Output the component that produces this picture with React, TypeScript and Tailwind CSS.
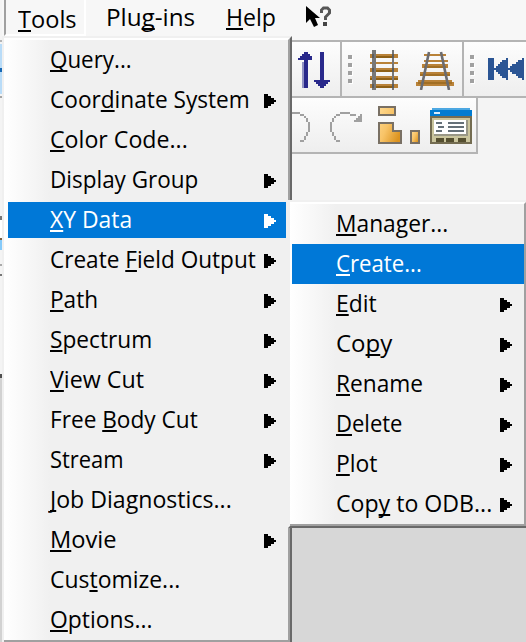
import { useLayoutEffect, useRef, useState } from "react";

type Item = { text: string; key: number; width: number; sub?: boolean; active?: boolean };

const toolsMenu: Item[] = [
  { text: "Query...", key: 0, width: 82 },
  { text: "Coordinate System", key: 4, width: 200, sub: true },
  { text: "Color Code...", key: 0, width: 138 },
  { text: "Display Group", key: -1, width: 148, sub: true },
  { text: "XY Data", key: 0, width: 82, sub: true, active: true },
  { text: "Create Field Output", key: 7, width: 206, sub: true },
  { text: "Path", key: 0, width: 48, sub: true },
  { text: "Spectrum", key: 0, width: 102, sub: true },
  { text: "View Cut", key: 0, width: 94, sub: true },
  { text: "Free Body Cut", key: 5, width: 148, sub: true },
  { text: "Stream", key: -1, width: 74, sub: true },
  { text: "Job Diagnostics...", key: 0, width: 182 },
  { text: "Movie", key: 0, width: 67, sub: true },
  { text: "Customize...", key: 3, width: 130 },
  { text: "Options...", key: 0, width: 102 },
];

const xyMenu: Item[] = [
  { text: "Manager...", key: 0, width: 112 },
  { text: "Create...", key: 0, width: 86, active: true },
  { text: "Edit", key: 0, width: 41, sub: true },
  { text: "Copy", key: 2, width: 56, sub: true },
  { text: "Rename", key: 0, width: 87, sub: true },
  { text: "Delete", key: 0, width: 66, sub: true },
  { text: "Plot", key: 0, width: 42, sub: true },
  { text: "Copy to ODB...", key: 3, width: 156, sub: true },
];

/* Menu caption condensed to its column width, with the mnemonic underlined. */
function Label({ text, mnemonic, width }: { text: string; mnemonic: number; width: number }) {
  const ref = useRef<HTMLSpanElement>(null);
  const [scale, setScale] = useState(1);
  useLayoutEffect(() => {
    if (ref.current) setScale(width / ref.current.offsetWidth);
  }, [width]);
  return (
    <span ref={ref} className="inline-block origin-left whitespace-pre" style={{ transform: `scaleX(${scale})` }}>
      {mnemonic < 0 ? text : (
        <>
          {text.slice(0, mnemonic)}
          <span className="underline decoration-2 underline-offset-2 [text-decoration-skip-ink:none]">{text[mnemonic]}</span>
          {text.slice(mnemonic + 1)}
        </>
      )}
    </span>
  );
}

function Arrow() {
  return (
    <svg width="12" height="14" viewBox="0 0 6 7" fill="currentColor" shapeRendering="crispEdges">
      <path d="M0 0h2v1h1.500v1H5v1h1v1H5v1H3.500v1H2v1H0z" />
    </svg>
  );
}

function MenuRow({ item, nested }: { item: Item; nested?: boolean }) {
  const box = nested ? "ml-0.5 h-10 pl-[44px] pr-3" : "my-0.5 ml-1 mr-0.5 h-9 pl-[42px] pr-2.5";
  const tone = item.active ? "bg-[#0078d7] text-white" : "text-black";
  return (
    <div className={`flex shrink-0 items-center justify-between ${box} ${tone}`}>
      <div className="h-[34px] w-0 leading-8"><Label text={item.text} mnemonic={item.key} width={item.width} /></div>
      {item.sub && <div className="pt-0.5"><Arrow /></div>}
    </div>
  );
}

function Grip() {
  return (
    <div className="flex flex-col gap-1">
      {[0, 1, 2, 3].map((n) => <i key={n} className="size-1 bg-[#a0a0a0] shadow-[1px_1px_white]" />)}
    </div>
  );
}

function SortIcon() {
  return (
    <svg width="32" height="36" viewBox="0 0 16 18" shapeRendering="crispEdges">
      <path fill="#9193c4" d="M2 5h1v13H2z" />
      <path fill="#29298b" d="M3 0h2v1h1v1h1v2H5v14H3V4H0V3h1V2h1V1h1zM11 0h2v14h3v1h-1v1h-1v1h-1v1h-2v-1h-1v-1H9v-1H8v-1h3z" />
    </svg>
  );
}

function Ladder() {
  return (
    <svg width="28" height="40" viewBox="0 0 14 20" shapeRendering="crispEdges">
      <path fill="#b98238" d="M0 2h14v2H0zM0 6h14v1H0zM0 9h14v2H0zM0 13h14v2H0zM0 17h14v2H0z" />
      <path fill="#8e6016" d="M3 3h8v1H3zM3 10h8v1H3zM0 14h14v1H0zM3 18h8v1H3z" />
      <path fill="#787878" d="M1 0h2v20H1zM11 0h1v20h-1z" />
      <path fill="#5c5c5c" d="M1 2h1v2H1zM1 9h1v2H1zM1 17h1v2H1zM11 2h1v2h-1zM11 9h1v2h-1zM11 17h1v2h-1z" />
    </svg>
  );
}

function Track() {
  return (
    <svg width="38" height="40" viewBox="0 0 19 20">
      <path fill="#b98238" d="M4 2h11v1H4zM4 5h12v1H4zM3 7h13v2H3zM2 11h15v2H2zM1 15h17v1h1v2H0v-2h1z" />
      <path fill="#8e6016" d="M4 8h11v1H4zM2 12h15v1H2zM1 16h17v1H1z" opacity=".55" />
      <path d="M6.500 1 2.500 20M12.500 1l4 19" stroke="#6c6c70" strokeWidth="1.3" />
    </svg>
  );
}

function RewindIcon() {
  return (
    <svg width="38" height="22" viewBox="0 0 19 11" fill="#2b5594" shapeRendering="crispEdges">
      <path d="M0 0h3v11H0zM9 0h1v11H9v-1H7V9H6V8H5V7H4V6H3V5h1V4h1V3h1V2h1V1h2zM17 0h1v11h-1v-1h-2V9h-1V8h-2V7h-1V6h-1V5h1V4h1V3h2V2h1V1h2z" />
    </svg>
  );
}

function UndoArc() {
  return (
    <svg width="18" height="30" viewBox="0 0 9 15" fill="none" stroke="#a0a0a0" shapeRendering="crispEdges">
      <path d="M0 .5h4M4 1.5h2M6 2.5h1M7.5 3v2M8.5 5v5M7.5 10v2M6.5 12v2M4 14.5h2" />
    </svg>
  );
}

function RedoIcon() {
  return (
    <svg width="32" height="30" viewBox="0 0 16 15" fill="none" stroke="#a0a0a0" shapeRendering="crispEdges">
      <path d="M5 .5h5M3 1.5h2M10 1.5h3M2 2.5h1M1.5 3v2M.5 5v5M1.5 10v2M2.5 12v2M3 14.5h2" />
      <path fill="#a0a0a0" stroke="none" d="M15 1h1v4h-4V4h1V3h1V2h1z" />
    </svg>
  );
}

function PartsIcon() {
  return (
    <svg width="42" height="38" viewBox="0 0 21 19" shapeRendering="crispEdges">
      <defs>
        <linearGradient id="amber" x1="0" y1="0" x2="1" y2=".7"><stop stopColor="#ffda91" /><stop offset=".5" stopColor="#f8c468" /><stop offset="1" stopColor="#dc931f" /></linearGradient>
      </defs>
      <g fill="url(#amber)" stroke="#797064">
        <path d="M.5.5h8v4h-8zM.5 8.500h7v4h4v6h-11z" />
        <path d="M16.500 12.500h4v6h-4z" />
      </g>
    </svg>
  );
}

function TableIcon() {
  return (
    <svg width="42" height="36" viewBox="0 0 21 18" shapeRendering="crispEdges">
      <path fill="#736c51" d="M0 4h21v14H0z" />
      <path fill="#cac59d" d="M1 5h19v12H1z" />
      <path fill="#007bd0" d="M0 1h1V0h19v1h1v3H0z" />
      <path fill="#4da8e2" d="M1 0h19v1H1z" />
      <path fill="#d7edfc" d="M2 2h3v1H2z" />
      <path fill="#fff" d="M2 6h16v7H2z" />
      <path fill="#999786" d="M18 6h1v8H2v-1h16z" />
      <path fill="#657078" d="M3 7h3v1H3zM9 7h8v1H9zM4 9h3v1H4zM9 9h8v1H9zM3 11h3v1H3zM9 11h8v1H9z" />
      <path fill="#554f30" d="M3 15h4v2H3zM8 15h4v2H8zM14 15h4v2h-4z" />
    </svg>
  );
}

function HelpCursor() {
  return (
    <svg width="26" height="24" viewBox="0 0 26 24" className="block">
      <path fill="#000" d="M0 0v17l4-4 4 8 4-2-3-7h5z" />
      <path d="M15.500 7V4l2-2h4l2 2v3l-4 4v3" fill="none" stroke="#565656" strokeWidth="3" />
      <path d="M17 16h4v4h-4z" fill="#444" />
    </svg>
  );
}

const edge = [
  { h: "h-10", c: "bg-[#f4f4f4]" }, { h: "h-0.5", c: "bg-[#b4b4b4]" }, { h: "h-0.5", c: "bg-[#f4f4f4]" },
  { h: "h-6", c: "bg-[#b9dcf8]" }, { h: "h-1", c: "bg-[#1769b5]" }, { h: "h-[22px]", c: "bg-[#b9dcf8]" },
  { h: "h-0.5", c: "bg-[#f4f4f4]" }, { h: "h-0.5", c: "bg-[#a5a5a5]" }, { h: "h-[118px]", c: "bg-[#f4f4f4]" },
  { h: "h-1", c: "bg-[#777]" }, { h: "h-[18px]", c: "bg-white" }, { h: "h-0.5", c: "bg-[#765e42]" },
  { h: "h-2.5", c: "bg-[#85cafa]" }, { h: "h-3.5", c: "bg-[#f4f4f4]" }, { h: "h-0.5", c: "bg-[#aaa]" },
  { h: "h-2", c: "bg-[#f4f4f4]" }, { h: "h-0.5", c: "bg-[#777]" }, { h: "h-[98px]", c: "bg-[#f4f4f4]" },
  { h: "h-1", c: "bg-[#505050]" }, { h: "h-[264px]", c: "bg-[#d2d2d2]" },
];

export default function App() {
  return (
    <div className="relative h-[642px] w-[526px] overflow-hidden bg-[#f4f4f4] font-['Open_Sans','Noto_Sans',sans-serif] text-[24px] text-black">
      <header className="flex h-10 items-start bg-[#f7f7f7] pl-1">
        <div className="h-9 w-[82px] border-b-2 border-l-2 border-r-2 border-b-white border-l-[#a0a0a0] border-r-white pl-3 pt-[3px] leading-8"><Label text="Tools" mnemonic={0} width={59} /></div>
        <div className="ml-5 w-[120px] pt-px leading-8"><Label text="Plug-ins" mnemonic={3} width={89} /></div>
        <div className="w-[80px] pt-px leading-8"><Label text="Help" mnemonic={0} width={50} /></div>
        <div className="pt-1.5"><HelpCursor /></div>
      </header>

      <main className="ml-[290px] flex h-[602px] flex-col">
        <div className="flex h-[58px] shrink-0 border-y-2 border-[#b4b4b4] bg-linear-to-b from-[#fdfdfd] to-[#eee]">
          <div className="flex w-[52px] items-center border-r-2 border-[#b4b4b4] pl-2 pt-0.5"><SortIcon /></div>
          <div className="flex w-[122px] items-center border-r-2 border-[#b4b4b4] pl-1.5"><Grip /><div className="ml-[18px] pt-0.5"><Ladder /></div><div className="ml-[18px] pt-0.5"><Track /></div></div>
          <div className="flex items-center pl-1.5"><Grip /><div className="ml-3.5"><RewindIcon /></div></div>
        </div>
        <div className="flex h-14 w-[188px] shrink-0 items-center border-b-2 border-r-2 border-[#b4b4b4] bg-linear-to-b from-[#fdfdfd] to-[#eee] pl-0.5">
          <div className="pt-1"><UndoArc /></div><div className="ml-5 pt-1"><RedoIcon /></div><div className="ml-4"><PartsIcon /></div><div className="ml-2.5 pt-0.5"><TableIcon /></div>
        </div>
        <div className="h-[372px] shrink-0" />
        <div className="grow bg-[#d7d7d7]" />
      </main>

      <aside className="absolute left-0 top-0 flex w-0.5 flex-col">
        {edge.map((part, i) => <i key={i} className={`w-0.5 shrink-0 ${part.h} ${part.c}`} />)}
      </aside>

      <nav className="absolute left-0.5 top-9 h-[606px] w-[290px] border-l-2 border-r-2 border-t-2 border-b-0 border-l-[#f0f0f0] border-r-[#696969] border-t-[#f0f0f0]">
        <div className="flex h-full flex-col border-b-2 border-r-2 border-t-2 border-b-[#a0a0a0] border-r-[#a0a0a0] border-t-white bg-[#f0f0f0] bg-linear-to-r from-white to-[#f0f0f0] to-[46px]">
          {toolsMenu.map((item) => <MenuRow key={item.text} item={item} />)}
        </div>
      </nav>

      <nav className="absolute left-[288px] top-[200px] h-[328px] w-[238px] border-b-2 border-l-2 border-t-2 border-b-[#696969] border-l-[#f0f0f0] border-t-[#f0f0f0]">
        <div className="flex h-full flex-col border-b-2 border-r-2 border-t-2 border-b-[#a0a0a0] border-r-[#a0a0a0] border-t-white bg-[#f0f0f0] bg-linear-to-r from-white to-[#f0f0f0] to-[46px]">
          {xyMenu.map((item) => <MenuRow key={item.text} item={item} nested />)}
        </div>
      </nav>
    </div>
  );
}
